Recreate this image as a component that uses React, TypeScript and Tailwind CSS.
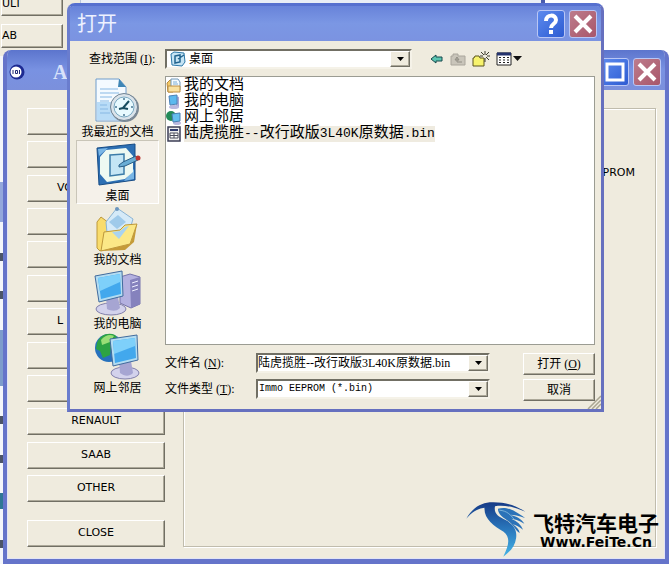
import type { ReactNode } from "react";
import clsx from "clsx";

const makes = ["", "", "VO", "", "", "", "L", "", "", "RENAULT", "SAAB", "OTHER"];

const raised =
  "border border-t-white border-l-white border-r-[#716f64] border-b-[#716f64] bg-[#efebde] shadow-[inset_-1px_-1px_0_#aca899]";
const sunken = "border-2 border-t-[#716f64] border-l-[#716f64] border-r-[#f5f2e8] border-b-[#f5f2e8] bg-white";

function DocumentIcon() {
  return (
    <svg viewBox="2 0 48 48" className="h-12 w-12">
      <path d="M4 2h23l7 8v34H4z" fill="#f4faff" stroke="#6f9ccc" />
      <path d="M5 25h28v18H5z" fill="#b9dcf7" />
      <path d="M27 2l7 8h-8z" fill="#3f86b5" />
      <path d="M8 12h18M8 16h19M8 20h12M8 24h9M8 28h7M8 32h8M8 36h10" stroke="#87b8e4" />
      <circle cx="33" cy="31" r="14" fill="#7c8894" />
      <circle cx="32" cy="30" r="13.5" fill="#dae3ea" stroke="#6f8292" />
      <circle cx="32" cy="30" r="10" fill="#e8faff" stroke="#7aa9c2" />
      <path d="M32 21v2M32 37v2M23 30h2M39 30h2" stroke="#4a7794" strokeWidth="1.5" />
      <path d="M37 24l-6 7-4 1M31 31l5 1" fill="none" stroke="#174d60" strokeWidth="2" />
    </svg>
  );
}

function DesktopIcon() {
  return (
    <svg viewBox="2 0 48 48" className="h-12 w-12">
      <path d="M5 7l38-4v36L7 44z" fill="#2d6fb4" stroke="#174c86" strokeLinejoin="round" />
      <path d="M6 8l10-1-9 8zM42 28v10l-10 2z" fill="#79b6e6" />
      <path d="M14 9l20-2 7 8v16l-8 7-18 3-7-8V16z" fill="#edf9f2" />
      <path d="M18 14l14-1v20l-14 2z" fill="#c4e6f5" stroke="#3b7ca8" strokeWidth="1.5" />
      <path d="M27 24l4-3 13-6 2 4-13 6-6 1z" fill="#69aed5" stroke="#285e87" />
      <circle cx="46" cy="17" r="2.5" fill="#bb3632" />
    </svg>
  );
}

function FolderIcon() {
  return (
    <svg viewBox="2 0 48 48" className="h-12 w-12">
      <path d="M5 17l4-5 8 6 3 4v20L8 46l-3-3z" fill="#f9dc6c" stroke="#bd983b" />
      <path d="M14 17L25 3l16 11-6 20-19 4z" fill="#d5eaf8" stroke="#8bb4d4" />
      <circle cx="25" cy="4" r="2" fill="#6c95bd" />
      <path d="M26 10l8 7-9 7-8-7z" fill="#9fcaea" />
      <path d="M12 27l16-2 5-5 12-1-7 20-29 7z" fill="#fbe887" stroke="#bd983b" />
      <path d="M20 27l8-1 5-4 4-1-10 13z" fill="#a9d3ef" />
      <path d="M45 19l-7 20-29 7 24-1 9-8z" fill="#c59b38" />
    </svg>
  );
}

function ComputerIcon() {
  return (
    <svg viewBox="2 0 48 48" className="h-12 w-12">
      <path d="M28 8l10-3 10 3v27l-9 4-11-5z" fill="#b4b1e0" stroke="#7674ab" />
      <path d="M38 11l10-3v27l-9 4z" fill="#8582bd" />
      <path d="M40 14l6-2M40 18l6-2M40 22l6-2" stroke="#eeefff" />
      <ellipse cx="19" cy="40" rx="15" ry="6" fill="#d3d2ec" stroke="#8280ab" />
      <path d="M14 28h12l2 11c-4 4-9 3-13 1z" fill="#a6a5d2" />
      <path d="M3 7l27-5 1 25-24 6z" fill="#b3dcf1" stroke="#426b9d" />
      <path d="M6 9l22-4 1 20-20 5z" fill="#42a8ed" />
      <path d="M6 9l22-4v8L8 22z" fill="#7ed0fa" />
    </svg>
  );
}

function NetworkIcon() {
  return (
    <svg viewBox="2 0 48 48" className="h-12 w-12">
      <circle cx="17" cy="15" r="14" fill="#2671bd" />
      <path d="M5 10C8 2 16-1 23 2l4 5-8 6-1 9-7 3-3-7-4-2z" fill="#2da344" />
      <path d="M9 7c4-5 9-6 13-4l-4 6-8 3z" fill="#9ade77" />
      <ellipse cx="33" cy="40" rx="14" ry="6" fill="#d3d2ec" stroke="#8280ab" />
      <path d="M27 28h12l2 12c-4 4-9 3-13 0z" fill="#a6a5d2" />
      <path d="M18 6l27-4 1 25-25 6z" fill="#b3dcf1" stroke="#426b9d" />
      <path d="M21 8l22-3 1 20-21 5z" fill="#42a8ed" />
      <path d="M21 8l22-3v8l-21 8z" fill="#7ed0fa" />
    </svg>
  );
}

function SmallIcon({ kind }: { kind: string }) {
  return (
    <svg viewBox="0 0 16 16" className="h-4 w-4 shrink-0">
      {kind === "desktop" && (
        <>
          <path d="M1 3l3-2 10 1 1 9-3 4-10-1z" fill="#c6e4f4" stroke="#2c78a8" />
          <path d="M5 5l5-1v7l-5 1zM8 8l6-4" fill="none" stroke="#22648f" strokeWidth="1.5" />
        </>
      )}
      {kind === "documents" && (
        <>
          <path d="M1 5l3-3 3 1v11H2z" fill="#f3c967" stroke="#b8893c" />
          <path d="M5 1h7l2 3v8H5z" fill="#f5fbff" stroke="#7199bb" />
          <path d="M7 4h4M7 6h5" stroke="#7daed5" />
          <path d="M2 8h12v6H2z" fill="#f9e1a0" stroke="#bc8e42" />
        </>
      )}
      {kind === "computer" && (
        <>
          <path d="M10 2l3 1v10l-3 1z" fill="#aaa8d6" />
          <ellipse cx="8" cy="13" rx="5" ry="2" fill="#b9b8df" />
          <path d="M3 2l8-1v9l-7 1z" fill="#5cb9ee" stroke="#4d82b7" />
        </>
      )}
      {kind === "network" && (
        <>
          <circle cx="5" cy="6" r="5" fill="#238b58" />
          <ellipse cx="11" cy="13" rx="4" ry="2" fill="#b9b8df" />
          <path d="M6 4l8-1v8l-7 1z" fill="#65bfef" stroke="#477fb3" />
        </>
      )}
      {kind === "file" && (
        <>
          <path d="M2 1h12v14H2z" fill="#eee" stroke="#3c3e55" strokeWidth="1.5" />
          <path d="M4 4h8" stroke="#303b6d" strokeWidth="2" />
          <path d="M4 7h8v5H4z" fill="white" stroke="#4c4e5c" />
          <path d="M8 7v5M4 9.500h8" stroke="#4c4e5c" />
        </>
      )}
    </svg>
  );
}

function DownArrow() {
  return (
    <span className={clsx("pointer-events-none flex w-5 shrink-0 items-center justify-center", raised)}>
      <svg viewBox="0 0 7 4" className="h-1 w-[7px]">
        <path d="M0 0h7L3.500 4z" />
      </svg>
    </span>
  );
}

function CaptionButton({ label, red, children }: { label: string; red?: boolean; children: ReactNode }) {
  return (
    <button
      aria-label={label}
      className={clsx(
        "flex h-7 w-7 items-center justify-center rounded-[3px] border border-[#b9c6f5]",
        red ? "bg-linear-to-br from-[#bd7c8c] to-[#a8566a]" : "bg-linear-to-br from-[#5d8aee] to-[#2d5bd2]",
      )}
    >
      <svg viewBox="0 0 28 28" className="h-7 w-7 shrink-0" fill="none" stroke="white" strokeWidth="4">
        {children}
      </svg>
    </button>
  );
}

const cross = <path d="M6 6l16 16M22 6L6 22" />;

const places = [
  { name: "我最近的文档", icon: <DocumentIcon /> },
  { name: "桌面", icon: <DesktopIcon />, active: true },
  { name: "我的文档", icon: <FolderIcon /> },
  { name: "我的电脑", icon: <ComputerIcon /> },
  { name: "网上邻居", icon: <NetworkIcon /> },
];

const files = [
  { name: "我的文档", kind: "documents" },
  { name: "我的电脑", kind: "computer" },
  { name: "网上邻居", kind: "network" },
  { name: "陆虎揽胜--改行政版3L40K原数据.bin", kind: "file" },
];

// Latin runs are set smaller so they stay half as wide as a Chinese character
function FileName({ name }: { name: string }) {
  return name.split(/([\x20-\x7e]+)/).map((part, i) =>
    i % 2 ? (
      <span key={i} className="text-[13px]">
        {part}
      </span>
    ) : (
      part
    ),
  );
}

function Toolbar() {
  return (
    <div className="flex items-center gap-[6px]">
      <button aria-label="Back">
        <svg viewBox="0 0 14 14" className="h-[14px] w-[14px]">
          <path d="M1 7l5-4v2h6v4H6v2z" fill="#5bc5b1" stroke="#16494d" />
        </svg>
      </button>
      <button aria-label="Up one level" disabled>
        <svg viewBox="0 0 16 14" className="h-[14px] w-4">
          <path d="M1 4h2V2h5v2h7v9H1z" fill="#c9c5ba" stroke="#aaa69c" />
          <path d="M7 6v4h5M7 5L5 8h4z" fill="none" stroke="#918e84" />
        </svg>
      </button>
      <button aria-label="New folder">
        <svg viewBox="0 0 18 16" className="h-4 w-[18px]">
          <path d="M1 7h1l1-2h4l1 2h4v8H1z" fill="#f7f36d" stroke="#5a5420" />
          <path d="M13 0v4M13 7v4M8 5h3M15 5h3M9 1l3 3M17 1l-3 3M14 6l3 3" stroke="#3c3b2b" />
        </svg>
      </button>
      <button aria-label="View menu" className="flex items-center">
        <svg viewBox="0 0 26 14" className="h-[14px] w-[26px]">
          <path d="M1 1h14v12H1z" fill="white" stroke="#222" />
          <path d="M1 2h14" stroke="#24336e" strokeWidth="3" />
          <path d="M3 5.500h2M7 5.500h2M11 5.500h2M3 8h2M7 8h2M11 8h2M3 10.500h2M7 10.500h2M11 10.500h2" stroke="#222" />
          <path d="M17 4h9l-4.500 5z" fill="#111" />
        </svg>
      </button>
    </div>
  );
}

function OpenDialog() {
  return (
    <section className="absolute top-[3px] right-[66px] left-[67px] rounded-t-lg border-[3px] border-t-[#5670cf] border-r-[#6670bf] border-b-[#6670bf] border-l-[#6a7dce] bg-[#efebde] font-['Liberation_Serif','Noto_Sans_CJK_SC',sans-serif]">
      <header className="flex h-[35px] items-center justify-between rounded-t-sm bg-linear-to-b from-[#6883da] via-[#7b97e4] to-[#7b93e1] px-1">
        <h1 className="pl-[3px] text-[20px] leading-6 text-[#eef2ff]">打开</h1>
        <div className="flex gap-1">
          <CaptionButton label="Help">
            <path d="M9 11c0-7 10-7 10-1 0 4-5 4-5 8M14 20v4" />
          </CaptionButton>
          <CaptionButton label="Close" red>{cross}</CaptionButton>
        </div>
      </header>

      <div className="flex items-center pt-2 pl-[19px] text-xs">
        <label htmlFor="look-in" className="w-[76px] shrink-0 whitespace-nowrap">
          查找范围 (<u>I</u>):
        </label>
        <div className={clsx("flex h-5 w-[247px] shrink-0", sunken)}>
          <span className="flex w-[22px] items-center justify-center">
            <SmallIcon kind="desktop" />
          </span>
          <select id="look-in" className="min-w-0 flex-1 appearance-none leading-4 outline-none">
            <option>桌面</option>
          </select>
          <DownArrow />
        </div>
        <div className="pl-[18px]">
          <Toolbar />
        </div>
      </div>

      <div className="flex px-[6px] pt-[7px] pb-2">
        <nav className="flex w-[83px] shrink-0 flex-col">
          {places.map((place) => (
            <button
              key={place.name}
              className={clsx(
                "flex h-16 flex-col items-center border text-xs leading-[14px] whitespace-nowrap",
                place.active
                  ? "border-t-[#c9c5b8] border-r-white border-b-white border-l-[#c9c5b8] bg-[#f5f1ea]"
                  : "border-transparent",
              )}
            >
              {place.icon}
              {place.name}
            </button>
          ))}
        </nav>

        <div className="min-w-0 flex-1 pl-[6px]">
          <ul className="h-[269px] border border-[#9b9c93] bg-white pt-px font-['Liberation_Mono','Noto_Sans_CJK_SC',monospace] text-[15px] leading-4">
            {files.map((file) => (
              <li key={file.name} className="flex h-4 items-center gap-[2px] whitespace-nowrap">
                <SmallIcon kind={file.kind} />
                <span className={clsx(file.kind === "file" && "bg-[#efebe0]")}>
                  <FileName name={file.name} />
                </span>
              </li>
            ))}
          </ul>

          <div className="flex justify-between pt-2 text-xs">
            <div className="flex flex-col gap-[6px]">
              <div className="flex items-center">
                <label htmlFor="file-name" className="w-[91px]">
                  文件名 (<u>N</u>):
                </label>
                <div className={clsx("flex h-5 w-[234px]", sunken)}>
                  <input
                    id="file-name"
                    defaultValue="陆虎揽胜--改行政版3L40K原数据.bin"
                    className="min-w-0 flex-1 leading-4 outline-none"
                  />
                  <DownArrow />
                </div>
              </div>
              <div className="flex items-center">
                <label htmlFor="file-type" className="w-[91px]">
                  文件类型 (<u>T</u>):
                </label>
                <div className={clsx("flex h-5 w-[234px]", sunken)}>
                  <select
                    id="file-type"
                    className="min-w-0 flex-1 appearance-none pl-px font-['Liberation_Mono',monospace] text-[10px] leading-4 outline-none"
                  >
                    <option>Immo EEPROM (*.bin)</option>
                  </select>
                  <DownArrow />
                </div>
              </div>
            </div>
            <div className="flex w-[72px] flex-col gap-1">
              <button className={clsx("h-[22px]", raised)}>
                打开 (<u>O</u>)
              </button>
              <button className={clsx("h-[22px]", raised)}>取消</button>
            </div>
          </div>
        </div>
      </div>

      <svg viewBox="0 0 14 14" className="absolute right-0 bottom-0 h-[14px] w-[14px]" stroke="#aaa692" strokeWidth="1.5">
        <path d="M1 14L14 1M5 14l9-9M9 14l5-5" />
      </svg>
    </section>
  );
}

function ProgrammerWindow() {
  return (
    <section className="absolute top-[50px] right-px bottom-0 left-[3px] flex flex-col overflow-hidden rounded-t-lg border-x-4 border-b-[5px] border-[#6574ca] bg-[#efebde]">
      <header className="flex h-10 shrink-0 items-center justify-between bg-linear-to-b from-[#5c75cd] via-[#7992e2] to-[#7b90dc] pt-1 pr-1 pl-[2px]">
        <div className="flex items-center gap-7">
          <svg viewBox="0 0 16 16" className="h-4 w-4">
            <circle cx="8" cy="8" r="7.500" fill="#1d2a91" />
            <circle cx="7" cy="8" r="5.500" fill="white" />
            <path d="M4 6v4M6.500 6.500h2v3h-2zM10.500 6v4" fill="none" stroke="#222b75" />
          </svg>
          <h2 className="font-['Liberation_Serif',serif] text-xl font-bold text-[#d9e2fa]">Ac</h2>
        </div>
        <div className="flex gap-1">
          <CaptionButton label="Maximize">
            <path d="M6 6h16v16H6z" strokeWidth="3" />
          </CaptionButton>
          <CaptionButton label="Close" red>{cross}</CaptionButton>
        </div>
      </header>
      <div className="flex min-h-0 flex-1 gap-[18px] border-x border-b border-[#e2e4f5] pt-[18px] pr-2 pb-[11px] pl-[19px] text-[11px]">
        <div className="flex w-[138px] shrink-0 flex-col gap-[18px]">
          <div className="flex flex-1 flex-col justify-between">
            {makes.map((make, i) => (
              <button key={i} className={clsx("h-[27px]", make.length < 3 && "pl-[29px] text-left", raised)}>
                {make}
              </button>
            ))}
          </div>
          <button className={clsx("h-[27px]", raised)}>CLOSE</button>
        </div>
        <div className="flex flex-1 justify-end border border-[#c0bcad] pt-14 pr-5 shadow-[inset_1px_1px_0_white,1px_1px_0_white]">
          PROM
        </div>
      </div>
    </section>
  );
}

function BackgroundWindow() {
  return (
    <section className="absolute -top-2 right-[125px] left-0 flex h-16 border-r-4 border-[#4a5cae] bg-[#e9eef6]">
      <div className="flex w-[81px] flex-col gap-2 border-r border-[#b9c6dc] bg-[#efebde] pl-px text-[11px]">
        <button className={clsx("h-6 w-[62px] text-left", raised)}>ULT</button>
        <button className={clsx("h-6 w-[62px] text-left", raised)}>AB</button>
      </div>
    </section>
  );
}

function Watermark() {
  return (
    <div className="absolute right-[11px] bottom-[3px] flex items-center gap-1 text-black">
      <svg viewBox="0 0 200 200" className="h-[66px] w-[66px]">
        <defs>
          <linearGradient id="wing" x1="0" y1="0" x2="0" y2="1">
            <stop offset="0" stopColor="#163a86" />
            <stop offset="0.5" stopColor="#2a78bd" />
            <stop offset="1" stopColor="#45b4e6" />
          </linearGradient>
        </defs>
        <path
          d="M10 72C28 38 58 21 92 22c38 0 70 10 97 29-34-16-66-21-92-17-4 22 8 30 32 42 25 13 35 31 32 54-3 24-18 42-39 57 18-38 22-58 1-76-30-18-59-38-58-72C44 41 25 53 10 72z"
          fill="url(#wing)"
        />
        <path
          d="M106 42c20-7 42-2 82 28-20-8-34-10-45-10 20 5 34 13 43 27-18-10-30-14-40-15 18 8 30 18 36 33-14-10-22-14-31-16 12 8 18 15 21 26-14-8-17-22-32-34-17-12-34-20-34-39z"
          fill="#2b72b8"
        />
        <path d="M110 46c24 2 34 14 44 27" fill="none" stroke="#9fcfe9" strokeWidth="2" />
      </svg>
      <div className="flex flex-col items-center pt-1 font-bold">
        <span className="font-['Noto_Sans_CJK_SC',sans-serif] text-[21px] leading-6">飞特汽车电子</span>
        <span className="font-['DejaVu_Sans',sans-serif] text-[14px] leading-4">Www.FeiTe.Cn</span>
      </div>
    </div>
  );
}

export default function App() {
  return (
    <main className="relative min-h-screen overflow-hidden bg-white font-['DejaVu_Sans','Noto_Sans_CJK_SC',sans-serif] text-black">
      <BackgroundWindow />
      {/* sliver of the desktop left of the windows */}
      <div className="flex h-screen w-[3px] flex-col justify-between bg-[#f4f6fb] pt-[182px] pb-4">
        <span className="h-10 bg-[#93a7dc]" />
        <span className="h-2 bg-[#4c5468]" />
        <span className="h-2 bg-[#4c5468]" />
        <span className="h-14 bg-[#7d9ccc]" />
        <span className="h-2 bg-[#4c5468]" />
        <span className="h-2 bg-[#4c5468]" />
        <span className="h-4 bg-[#2f7796]" />
        <span className="h-2 bg-[#4c5468]" />
      </div>
      <ProgrammerWindow />
      <OpenDialog />
      <Watermark />
    </main>
  );
}
